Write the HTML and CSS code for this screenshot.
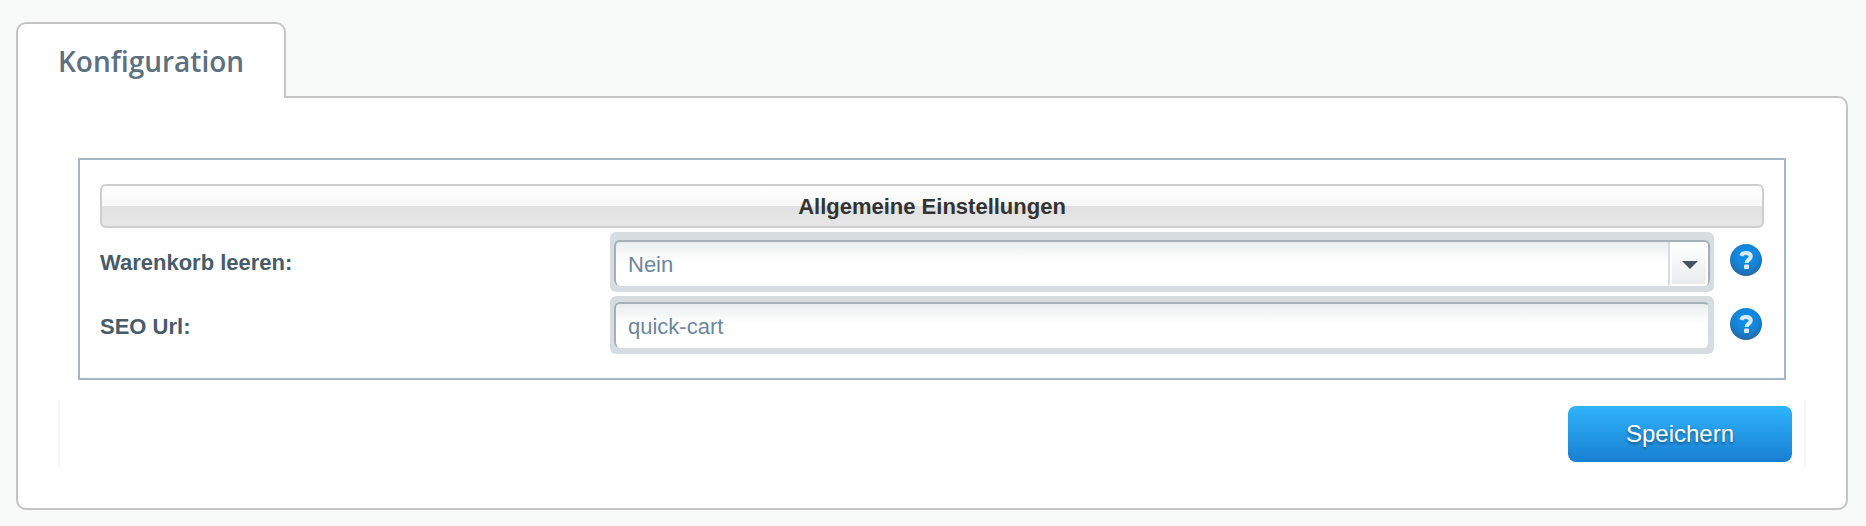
FILE: index.html
```html
<!DOCTYPE html>
<html lang="de">
<head>
    <meta charset="UTF-8">
    <meta name="viewport" content="width=device-width, initial-scale=1.0">
    <title>Konfiguration</title>
    <link rel="stylesheet" href="styles.css">
</head>
<body>
    <!-- Icon -->
    <svg class="sprite" aria-hidden="true">
        <defs>
            <radialGradient id="helpFill" cx="0.5" cy="0.35" r="0.65">
                <stop offset="0" stop-color="#0b93f2"/>
                <stop offset="0.6" stop-color="#1483d6"/>
                <stop offset="1" stop-color="#2468a4"/>
            </radialGradient>
            <symbol id="help" viewBox="0 0 32 32">
                <circle cx="16" cy="16" r="16" fill="url(#helpFill)"/>
                <path d="M11.200 11.800C12 9.500 13.500 9 16 9c3 0 4.800 1.200 4.800 3.600 0 3.200-4.300 2.800-4.300 6.400" fill="none" stroke="#d9ebfa" stroke-width="4"/>
                <rect x="14" y="20.500" width="5" height="4.500" rx="1" fill="#d9ebfa"/>
            </symbol>
        </defs>
    </svg>

    <div class="container">
        <div class="tabs">
            <button type="button" class="tab">Konfiguration</button>
        </div>

        <form class="panel">
            <div class="settings">
                <h2 class="settings-title">Allgemeine Einstellungen</h2>

                <div class="form-row">
                    <label for="clearCart">Warenkorb leeren:</label>
                    <div class="field select-field">
                        <select id="clearCart" name="clearCart">
                            <option selected>Nein</option>
                            <option>Ja</option>
                        </select>
                        <span class="trigger">
                            <svg width="16" height="8" viewBox="0 0 16 8">
                                <path d="M0 0h16L8 8z" fill="#46535d"/>
                            </svg>
                        </span>
                    </div>
                    <button type="button" class="help-btn" aria-label="Hilfe">
                        <svg width="32" height="32"><use href="#help"/></svg>
                    </button>
                </div>

                <div class="form-row">
                    <label for="seoUrl">SEO Url:</label>
                    <div class="field">
                        <input type="text" id="seoUrl" name="seoUrl" value="quick-cart">
                    </div>
                    <button type="button" class="help-btn" aria-label="Hilfe">
                        <svg width="32" height="32"><use href="#help"/></svg>
                    </button>
                </div>
            </div>

            <div class="actions">
                <button type="submit" class="submit-btn">Speichern</button>
            </div>
        </form>
    </div>
</body>
</html>
```
FILE: styles.css
```css
* {
    margin: 0;
    padding: 0;
    box-sizing: border-box;
    font-family: 'Liberation Sans', Arial, sans-serif;
}

body {
    background: #f8fafa;
    padding: 22px 18px 16px 16px;
}

.sprite {
    position: absolute;
    width: 0;
    height: 0;
}

/* Tabs */
.tabs {
    display: flex;
}

.tab {
    position: relative;
    height: 76px;
    margin-bottom: -2px;
    padding: 0 40px;
    background: white;
    border: 2px solid #c4c4c4;
    border-bottom: none;
    border-radius: 10px 10px 0 0;
    color: #5c7080;
    font-family: 'Open Sans', sans-serif;
    font-size: 28px;
    font-weight: 600;
    cursor: pointer;
}

.panel {
    padding: 40px;
    background: white;
    border: 2px solid #c4c4c4;
    border-radius: 0 10px 10px 10px;
}

.settings {
    margin: 20px;
    padding: 24px 20px;
    border: 2px solid #a5b5c1;
}

.settings-title {
    height: 44px;
    margin-bottom: 4px;
    border: 2px solid #cecece;
    border-radius: 6px;
    background: linear-gradient(to bottom, #ffffff, #f8f8f8 50%, #e1e1e1 50%, #e6e6e6);
    color: #333333;
    font-size: 22px;
    line-height: 42px;
    text-align: center;
}

/* Form rows */
.form-row {
    display: flex;
    align-items: flex-start;
    gap: 16px;
}

.form-row + .form-row {
    margin-top: 4px;
}

.form-row label {
    flex: 0 0 494px;
    padding-top: 15px;
    color: #475c6a;
    font-size: 22px;
    font-weight: bold;
    line-height: 32px;
}

.field {
    position: relative;
    flex: 1;
    padding: 6px 4px;
    background: #d7dce0;
    border-radius: 6px;
}

.select-field {
    padding-top: 8px;
}

.field select,
.field input {
    display: block;
    width: 100%;
    height: 46px;
    padding: 0 12px;
    border: 2px solid #a5b0b6;
    border-right-color: #d7dce0;
    border-bottom: none;
    border-radius: 6px;
    background: linear-gradient(to bottom, #eaeeee, #ffffff 20px) white;
    color: #6b879b;
    font-size: 22px;
    outline: none;
}

.field input {
    padding-top: 2px;
}

.field select {
    border-right-color: #a5b0b6;
    appearance: none;
}

.trigger {
    position: absolute;
    top: 10px;
    right: 6px;
    display: flex;
    align-items: center;
    justify-content: center;
    width: 40px;
    height: 44px;
    padding: 4px 0 0 4px;
    border: 2px solid white;
    border-left-color: #d7dce0;
    border-top: none;
    border-radius: 0 4px 4px 0;
    background: linear-gradient(to bottom, #ffffff, #e9ebed);
    box-shadow: inset 2px 0 0 white;
    pointer-events: none;
}

.help-btn {
    width: 34px;
    height: 32px;
    margin-top: 12px;
    border: none;
    background: none;
    text-align: left;
    cursor: pointer;
}

.help-btn svg {
    display: block;
}

/* Footer */
.actions {
    display: flex;
    justify-content: flex-end;
    padding: 6px 12px;
    border: 2px solid #f6f6f6;
    border-top: none;
    border-bottom: none;
    border-radius: 4px;
}

.submit-btn {
    width: 224px;
    height: 56px;
    border: none;
    border-radius: 8px;
    background: linear-gradient(to bottom, #2fb4fa, #187fd2);
    color: white;
    font-size: 24px;
    text-shadow: 0 2px 3px rgba(0, 0, 0, 0.4);
    cursor: pointer;
}
```
